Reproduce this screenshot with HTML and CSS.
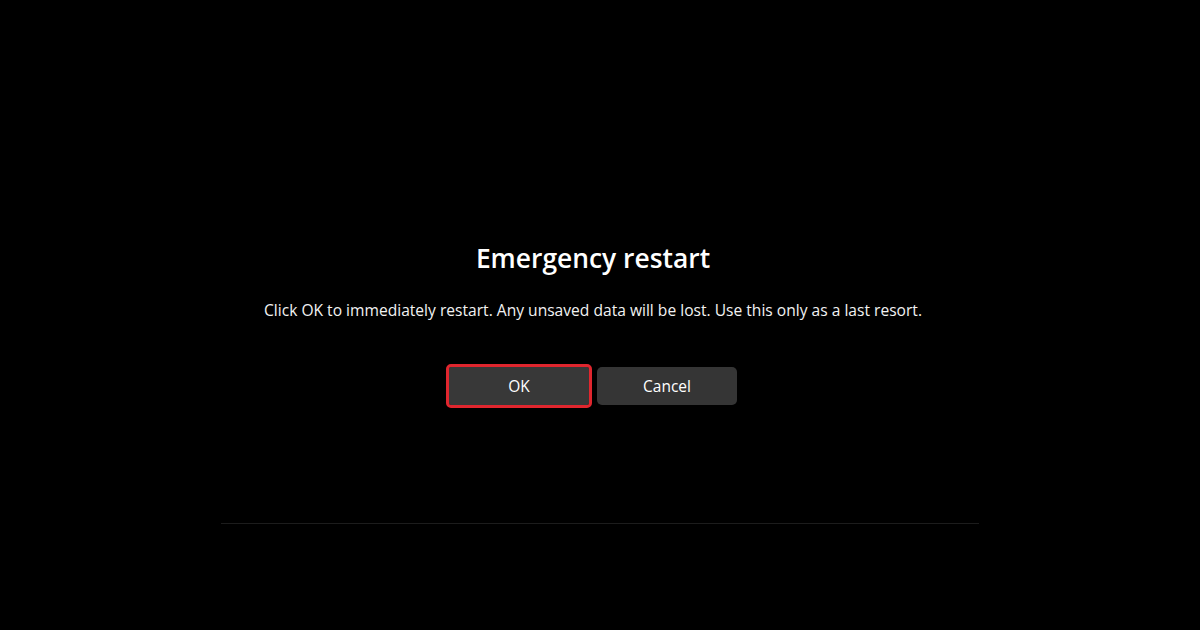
FILE: index.html
```html
<!DOCTYPE html>
<html lang="en">
<head>
  <meta charset="UTF-8"/>
  <title>Emergency restart</title>
  <link rel="stylesheet" href="styles.css">
</head>
<body>

  <div class="screen">
    <div class="dialog">
      <div class="title">Emergency restart</div>
      <div class="message">Click OK to immediately restart. Any unsaved data will be lost. Use this only as a last resort.</div>
      <div class="actions">
        <button class="btn btn-ok">OK</button>
        <button class="btn">Cancel</button>
      </div>
    </div>
    <div class="divider"></div>
  </div>

</body>
</html>
```

FILE: styles.css
```css
html, body { margin: 0; background: #000; }
body { font-family: "Open Sans", "Noto Sans", sans-serif; color: #fff; width: 1200px; height: 630px; overflow: hidden; }

.screen {
  display: flex;
  flex-direction: column;
  align-items: center;
  padding-top: 240px;
}
.dialog {
  display: flex;
  flex-direction: column;
  align-items: center;
  margin-right: 14px;
}
.title {
  font-size: 26.4px;
  font-weight: 600;
  line-height: 36px;
}
.message {
  font-size: 15.6px;
  line-height: 20px;
  margin-top: 24px;
  color: #f2f2f2;
}
.actions {
  display: flex;
  gap: 8px;
  margin-top: 47px;
}
.btn {
  width: 140px;
  height: 38px;
  border: none;
  border-radius: 5px;
  background: #353535;
  color: #fff;
  font-family: inherit;
  font-size: 15.5px;
}
.btn-ok {
  border-radius: 2px;
  background: #383838;
  outline: 3px solid #e0262e;
  outline-offset: 0;
}
.divider {
  width: 758px;
  height: 1px;
  background: #1c1c1c;
  margin-top: 118px;
}
```
